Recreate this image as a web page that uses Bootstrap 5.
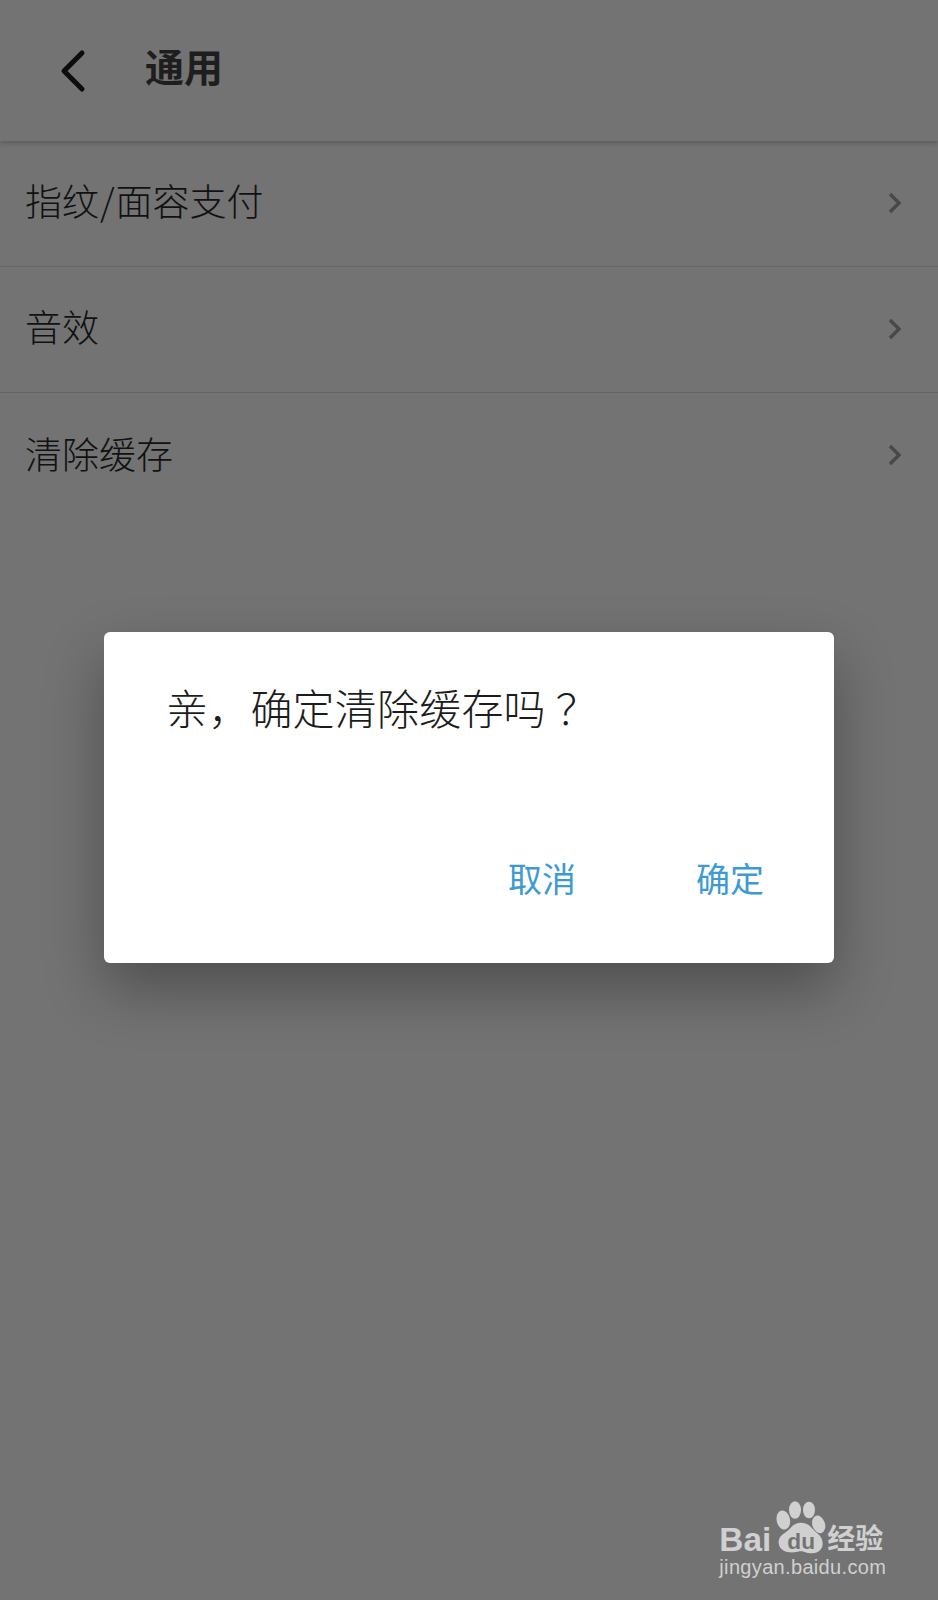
<!DOCTYPE html>
<html lang="zh">
<head>
    <meta charset="UTF-8">
    <title>通用</title>
    <link href="https://cdn.jsdelivr.net/npm/bootstrap@5.3.3/dist/css/bootstrap.min.css" rel="stylesheet">
    <style>
      body {
        background: #737373;
        font-family: "Noto Sans CJK SC", "Liberation Sans", sans-serif;
      }
      .screen { width: 938px; height: 1600px; overflow: hidden; background: #737373; }
      .top-bar { height: 141px; padding-left: 59px; box-shadow: 0 2px 5px rgba(0,0,0,.22); }
      .top-bar svg { width: 28px; height: 44px; }
      .top-title { margin: 0 0 0 58px; font-size: 39px; font-weight: 700; color: #1e1e1e; line-height: 1; position: relative; top: -5px; }
      .set-row { height: 126px; padding: 0 36px 0 25px; border-bottom: 1px solid #666; font-size: 37px; font-weight: 300; line-height: 1; color: #111; }
      .set-row:last-child { border-bottom: 0; }
      .set-label { padding-bottom: 6px; }
      .set-row svg { width: 14px; height: 22px; position: relative; top: -1px; }
      .slash-gap { margin: 0 1px; }
      .ask-box {
        left: 104px; top: 632px; width: 730px; height: 331px;
        background: #fff; border-radius: 6px;
        box-shadow: 0 26px 60px rgba(0,0,0,.32);
      }
      .ask-text { margin: 0; padding: 54px 0 0 62px; font-size: 42px; font-weight: 300; line-height: 1; letter-spacing: .2px; color: #1c1c1c; }
      .ask-q { padding-left: 10px; }
      .ask-btns { bottom: 68px; right: 70px; gap: 120px; }
      .ask-btn { padding: 0; border: 0; background: none; font-size: 34px; font-weight: 400; line-height: 1; color: #3d9ad2; }
      .paw-logo { left: 700px; top: 1490px; width: 200px; height: 110px; }
      .paw-a { font-family: "Liberation Sans", sans-serif; font-size: 100px; font-weight: 700; fill: #d0d0d0; }
      .paw-b { font-family: "Liberation Sans", sans-serif; font-size: 68px; font-weight: 700; fill: #737373; }
      .paw-c { font-family: "Noto Sans CJK SC", sans-serif; font-size: 84px; font-weight: 700; fill: #d0d0d0; }
      .paw-d { font-family: "Liberation Sans", sans-serif; font-size: 60px; fill: #d0d0d0; letter-spacing: 1px; }
    </style>
</head>
<body>
<div class="screen position-relative">
    <!-- header -->
    <div class="top-bar d-flex align-items-center">
        <svg viewBox="0 0 28 44"><path d="M23 4 L5 22 L23 40" fill="none" stroke="#0c0c0c" stroke-width="5" stroke-linecap="round" stroke-linejoin="round"/></svg>
        <h1 class="top-title">通用</h1>
    </div>

    <!-- settings rows -->
    <div>
        <div class="set-row d-flex align-items-center justify-content-between">
            <span class="set-label">指纹<span class="slash-gap">/</span>面容支付</span>
            <svg viewBox="0 0 14 22"><path d="M2 2 L11 11 L2 20" fill="none" stroke="#484848" stroke-width="3.4"/></svg>
        </div>
        <div class="set-row d-flex align-items-center justify-content-between">
            <span class="set-label">音效</span>
            <svg viewBox="0 0 14 22"><path d="M2 2 L11 11 L2 20" fill="none" stroke="#484848" stroke-width="3.4"/></svg>
        </div>
        <div class="set-row d-flex align-items-center justify-content-between">
            <span class="set-label">清除缓存</span>
            <svg viewBox="0 0 14 22"><path d="M2 2 L11 11 L2 20" fill="none" stroke="#484848" stroke-width="3.4"/></svg>
        </div>
    </div>

    <!-- confirm dialog -->
    <div class="ask-box position-absolute">
        <p class="ask-text">亲，确定清除缓存吗<span class="ask-q">？</span></p>
        <div class="ask-btns position-absolute d-flex">
            <button type="button" class="ask-btn">取消</button>
            <button type="button" class="ask-btn">确定</button>
        </div>
    </div>

    <!-- watermark -->
    <svg class="paw-logo position-absolute" viewBox="0 0 600 330">
        <ellipse cx="250" cy="90" rx="20" ry="29" fill="#d0d0d0" transform="rotate(-12 250 90)"/>
        <ellipse cx="285" cy="60" rx="18" ry="26" fill="#d0d0d0"/>
        <ellipse cx="327" cy="60" rx="18" ry="25" fill="#d0d0d0"/>
        <ellipse cx="356" cy="103" rx="19" ry="27" fill="#d0d0d0" transform="rotate(-18 356 103)"/>
        <path d="M302 98 C330 98 336 118 352 130 C378 150 372 190 336 190 C316 190 312 182 298 184 C282 190 240 192 236 160 C234 136 256 130 268 118 C278 106 286 98 302 98 Z" fill="#d0d0d0"/>
        <text class="paw-a" x="58" y="184">Bai</text>
        <text class="paw-b" x="262" y="176">du</text>
        <text class="paw-c" x="382" y="178">经验</text>
        <text class="paw-d" x="58" y="252">jingyan.baidu.com</text>
    </svg>
</div>
<script src="https://cdn.jsdelivr.net/npm/bootstrap@5.3.3/dist/js/bootstrap.bundle.min.js"></script>
</body>
</html>
